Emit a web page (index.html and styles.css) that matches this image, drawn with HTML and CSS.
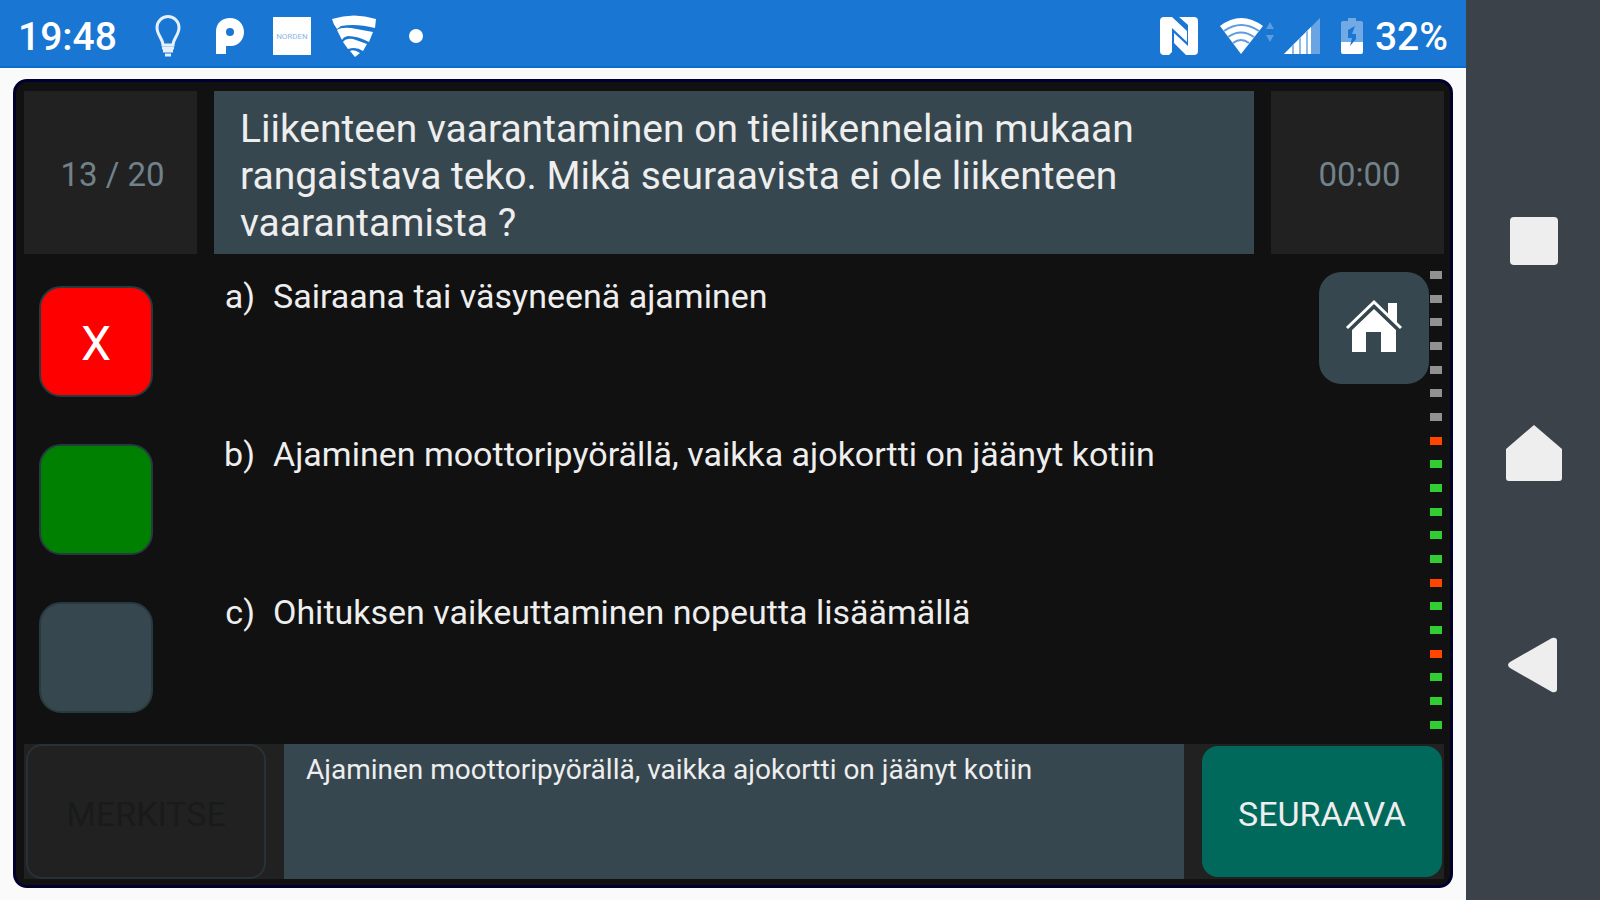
FILE: index.html
```
<!DOCTYPE html>
<html lang="fi">

<head>
    <meta charset="utf-8">
    <meta name="viewport" content="width=device-width, initial-scale=1">
    <title>Teoriakoe</title>
    <link rel="stylesheet" href="styles.css">
</head>

<body>
    <div class="screen">
        <header class="status">
            <div class="status-left">
                <span class="clock">19:48</span>
                <svg class="ico-bulb" width="26" height="42" viewBox="0 0 26 42" fill="none" stroke="#e6f0fb" stroke-width="3">
                    <path d="M8 30C8 24 2 20 2 12.500a11 11 0 0 1 22 0C24 20 18 24 18 30z" />
                    <path d="M7 33h12M8 36h10M10 40h6" stroke-width="3" />
                </svg>
                <svg class="ico-p" width="30" height="38" viewBox="0 0 30 38">
                    <path fill="#fff" fill-rule="evenodd" d="M1 37V15C1 6 7 1 15 1s14 6 14 14-6 14-13 14h-5v8zM15 11a4 4 0 1 0 0 8 4 4 0 0 0 0-8z" />
                </svg>
                <span class="badge"><span>NORDEN</span></span>
                <svg class="ico-shield" width="46" height="42" viewBox="0 0 46 42" fill="#fff">
                    <path d="M1 4Q23-3 45 4L44 13Q25 8 10 11L6 14Q2 9 1 4z" />
                    <path d="M6 15Q10 12 20 13L42 17L38 27Q27 21 17 21Q12 22 11 25z" />
                    <path d="M12 27Q15 23 22 24L36 29L32 36Q25 31 17 34z" />
                    <path d="M19 36Q23 34 29 38L24 42z" />
                </svg>
                <span class="more"></span>
            </div>
            <div class="status-right">
                <svg class="ico-nfc" width="40" height="40" viewBox="0 0 40 40" fill="#fff">
                    <path d="M5 1H13L28 15V26L13 12V36L10 39H5Q1 39 1 35V5Q1 1 5 1z" />
                    <path d="M20 1H35Q39 1 39 5V35Q39 39 35 39H27L15 27V17L29 30V9z" />
                </svg>
                <svg class="ico-wifi" width="56" height="38" viewBox="0 0 56 38">
                    <path fill="#fff" d="M1 9Q22-7 44 9L22 37z" />
                    <path fill="none" stroke="#5c9ce0" stroke-width="2" d="M5 14Q22 2 40 14M9 20Q22 11 35 20M14 26Q22 20 30 26" />
                    <path fill="#5c9ce0" d="M47 12L51 5L55 12zM47 18L51 25L55 18z" />
                </svg>
                <svg class="ico-signal" width="38" height="38" viewBox="0 0 38 38">
                    <path fill="#6aa5e3" d="M1 37L37 1V37z" />
                    <path fill="#fff" d="M1 37L28 10V37z" />
                    <path stroke="#8dbbea" stroke-width="2" d="M10 37V28M17 37V21M24 37V14" />
                </svg>
                <svg class="ico-battery" width="22" height="38" viewBox="0 0 22 38">
                    <path fill="#72aae5" d="M7 1H15V4H20Q22 4 22 6V26H0V6Q0 4 2 4H7z" />
                    <path fill="#fff" d="M0 25H22V35Q22 37 20 37H2Q0 37 0 35z" />
                    <path fill="#1976d2" d="M14 9L7 13V21H11L9 29L15 22V17H11z" />
                </svg>
                <span class="clock">32%</span>
            </div>
        </header>

        <main class="quiz">
            <section class="top">
                <div class="info">13 / 20</div>
                <h1 class="question">Liikenteen vaarantaminen on tieliikennelain mukaan rangaistava teko. Mikä seuraavista ei ole liikenteen vaarantamista ?</h1>
                <div class="info">00:00</div>
            </section>

            <section class="middle">
                <div class="answers">
                    <div class="answer">
                        <button class="pick wrong" type="button" aria-labelledby="a-text">X</button>
                        <span class="letter">a)</span>
                        <span class="text" id="a-text">Sairaana tai väsyneenä ajaminen</span>
                    </div>
                    <div class="answer">
                        <button class="pick right" type="button" aria-labelledby="b-text"></button>
                        <span class="letter">b)</span>
                        <span class="text" id="b-text">Ajaminen moottoripyörällä, vaikka ajokortti on jäänyt kotiin</span>
                    </div>
                    <div class="answer">
                        <button class="pick" type="button" aria-labelledby="c-text"></button>
                        <span class="letter">c)</span>
                        <span class="text" id="c-text">Ohituksen vaikeuttaminen nopeutta lisäämällä</span>
                    </div>
                </div>
                <button class="home" type="button" aria-label="Koti">
                    <svg width="58" height="54" viewBox="0 0 58 54">
                        <path fill="#fff" d="M29 10L51 31V53H36V33H21V53H7V31z" />
                        <path fill="#fff" d="M43 4H52V24L43 16z" />
                        <path fill="none" stroke="#37474f" stroke-width="2" d="M4 32L29 8L54 32" />
                        <path fill="none" stroke="#fff" stroke-width="3" d="M2 29L29 3L56 29" />
                    </svg>
                </button>
                <div class="dots">
                    <i></i><i></i><i></i><i></i><i></i><i></i><i></i>
                    <i class="bad"></i>
                    <i class="ok"></i><i class="ok"></i><i class="ok"></i><i class="ok"></i><i class="ok"></i>
                    <i class="bad"></i>
                    <i class="ok"></i><i class="ok"></i>
                    <i class="bad"></i>
                    <i class="ok"></i><i class="ok"></i><i class="ok"></i>
                </div>
            </section>

            <section class="bottom">
                <button class="btn mark" type="button" disabled>MERKITSE</button>
                <p class="explain">Ajaminen moottoripyörällä, vaikka ajokortti on jäänyt kotiin</p>
                <button class="btn next" type="button">SEURAAVA</button>
            </section>
        </main>
    </div>

    <nav class="navbar">
        <button type="button" aria-label="Viimeisimmät">
            <svg width="56" height="56" viewBox="0 0 56 56"><rect x="4" y="4" width="48" height="48" rx="4" /></svg>
        </button>
        <button type="button" aria-label="Aloitus">
            <svg width="56" height="56" viewBox="0 0 56 56"><path d="M28 0L56 24V53Q56 56 53 56H3Q0 56 0 53V24z" /></svg>
        </button>
        <button type="button" aria-label="Takaisin">
            <svg width="56" height="56" viewBox="0 0 56 56"><path d="M4 25L46 1Q51 0 51 4V52Q51 56 46 55L4 31Q0 28 4 25z" /></svg>
        </button>
    </nav>
</body>

</html>
```
FILE: styles.css
```
* {
    box-sizing: border-box;
}

body {
    margin: 0;
    display: flex;
    min-height: 100vh;
    background-color: #fafafa;
    color: #eeeeee;
    font-family: Roboto, "Liberation Sans", sans-serif;
}

button {
    padding: 0;
    border: none;
    color: inherit;
    font-family: inherit;
}

svg {
    display: block;
}

.screen {
    flex: 1;
    display: flex;
    flex-direction: column;
}

/* status bar */
.status {
    display: flex;
    justify-content: space-between;
    height: 68px;
    padding: 6px 18px 0;
    background-color: #1976d2;
    border-bottom: 2px solid #0a6cce;
}

.status-left,
.status-right {
    display: flex;
    align-items: center;
}

.clock {
    padding-top: 2px;
    color: #ffffff;
    font-size: 39px;
    font-weight: 500;
    line-height: 48px;
}

.ico-bulb {
    margin-left: 38px;
}

.ico-p {
    margin-left: 34px;
}

.badge {
    display: flex;
    align-items: center;
    justify-content: center;
    width: 38px;
    height: 38px;
    margin-left: 28px;
    background-color: #ffffff;
    color: #8fb8e6;
    font-size: 8px;
}

.ico-shield {
    margin-left: 20px;
}

.more {
    width: 14px;
    height: 14px;
    margin-left: 32px;
    border-radius: 50%;
    background-color: #ffffff;
}

.ico-wifi {
    margin-left: 20px;
}

.ico-signal {
    margin-left: 8px;
}

.ico-battery {
    margin: 0 12px 0 20px;
}

/* quiz */
.quiz {
    flex: 1;
    display: flex;
    flex-direction: column;
    margin: 11px 13px 12px;
    padding: 9px 6px 6px 8px;
    background-color: #111111;
    border: 3px solid #00002e;
    border-radius: 14px;
}

.top {
    display: flex;
    gap: 17px;
}

.info {
    display: flex;
    align-items: center;
    justify-content: center;
    width: 173px;
    padding: 4px 0 0 4px;
    background-color: #212121;
    color: #71828b;
    font-size: 33px;
}

.question {
    flex: 1;
    margin: 0;
    padding: 15px 26px 7px;
    background-color: #37474f;
    font-size: 39px;
    font-weight: 400;
    line-height: 47px;
}

.middle {
    flex: 1;
    display: flex;
    align-items: flex-start;
}

.answers {
    flex: 1;
    padding: 8px 0 8px 15px;
}

.answer {
    display: flex;
    height: 158px;
    padding-top: 13px;
}

.pick {
    width: 114px;
    height: 111px;
    margin-top: 11px;
    background-color: #37474f;
    border: 2px solid #263a40;
    border-radius: 22px;
    font-size: 48px;
}

.wrong {
    padding-top: 4px;
    background-color: #ff0000;
    color: #ffffff;
}

.right {
    background-color: #008000;
}

.letter,
.text {
    font-size: 34px;
    line-height: 42px;
}

.letter {
    width: 102px;
    text-align: right;
}

.text {
    flex: 1;
    padding-left: 18px;
}

.home {
    display: flex;
    justify-content: center;
    width: 110px;
    height: 112px;
    margin-top: 18px;
    padding-top: 27px;
    background-color: #37474f;
    border-radius: 22px;
}

.dots {
    align-self: stretch;
    display: flex;
    flex-direction: column;
    justify-content: space-between;
    margin: 17px 2px 15px 1px;
}

.dots i {
    width: 12px;
    height: 8px;
    background-color: #919191;
}

.dots .ok {
    background-color: #32cd32;
}

.dots .bad {
    background-color: #ff4500;
}

.bottom {
    display: flex;
    gap: 18px;
    height: 135px;
    padding: 0 2px;
    background-color: #212121;
}

.btn {
    width: 240px;
    padding-top: 4px;
    border-radius: 16px;
    font-size: 34px;
}

.mark {
    background-color: #212121;
    border: 2px solid #263238;
    color: #191b1b;
}

.explain {
    flex: 1;
    margin: 0;
    padding: 8px 22px;
    background-color: #37474f;
    font-size: 28px;
    line-height: 36px;
}

.next {
    margin: 2px 0;
    background-color: #00695c;
}

/* system buttons */
.navbar {
    display: flex;
    flex-direction: column;
    align-items: center;
    justify-content: center;
    gap: 156px;
    width: 134px;
    padding: 6px 0 0 2px;
    background-color: #3c424a;
}

.navbar button {
    background: none;
}

.navbar svg {
    fill: #eeeeee;
}
```
